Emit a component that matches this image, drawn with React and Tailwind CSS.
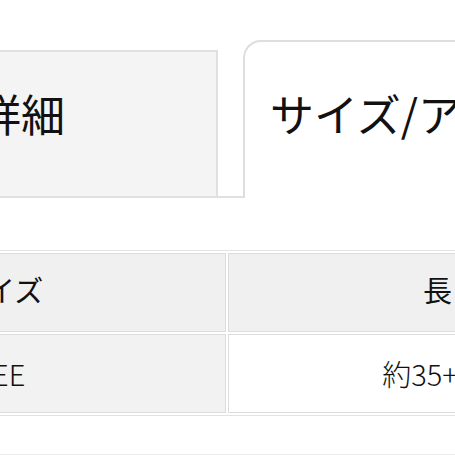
export default function App() {
  const font = { fontFamily: '"Noto Sans CJK JP", "Noto Sans", sans-serif' };

  return (
    <div className="w-[455px] h-[455px] overflow-hidden bg-white text-[#111]" style={font}>
      {/* タブ */}
      <div className="flex items-end pt-[40px]">
        <div className="w-[218px] h-[148px] shrink-0 overflow-hidden border-y-2 border-r-2 border-[#e0e0e0] bg-[#f4f4f4] pt-[39px]">
          <div className="-ml-[111px] whitespace-nowrap text-[44px] leading-[44px]">商品詳細</div>
        </div>
        <div className="w-[25px] shrink-0 border-b-2 border-[#e0e0e0]"></div>
        <div className="w-[440px] h-[158px] shrink-0 border-t-2 border-l-2 border-[#dedede] rounded-tl-[18px] bg-white pt-[49px] pl-[25px]">
          <div className="whitespace-nowrap text-[44px] leading-[44px]">サイズ/アイテム</div>
        </div>
      </div>

      {/* サイズ表 */}
      <div className="mt-[52px] -ml-[70px] w-[760px]">
        <table className="border-separate border-spacing-[2px] border-y border-[#e2e2e2] text-[29px] font-light">
          <tbody>
            <tr>
              <th className="w-[294px] h-[79px] border border-[#dcdcdc] bg-[#f0f0f0] pl-[24px] pb-[6px] text-left font-normal">サイズ</th>
              <th className="w-[440px] h-[79px] border border-[#dcdcdc] bg-[#f0f0f0] pl-[8px] pb-[6px] text-center font-normal">長さ</th>
            </tr>
            <tr>
              <td className="h-[79px] border border-[#dcdcdc] bg-[#f2f2f2] pl-[26px] text-left">FREE</td>
              <td className="h-[79px] border border-[#dcdcdc] bg-white text-center">約35+5cm</td>
            </tr>
          </tbody>
        </table>
        <div className="mt-[38px] border-t border-[#ececec]"></div>
      </div>
    </div>
  );
}
